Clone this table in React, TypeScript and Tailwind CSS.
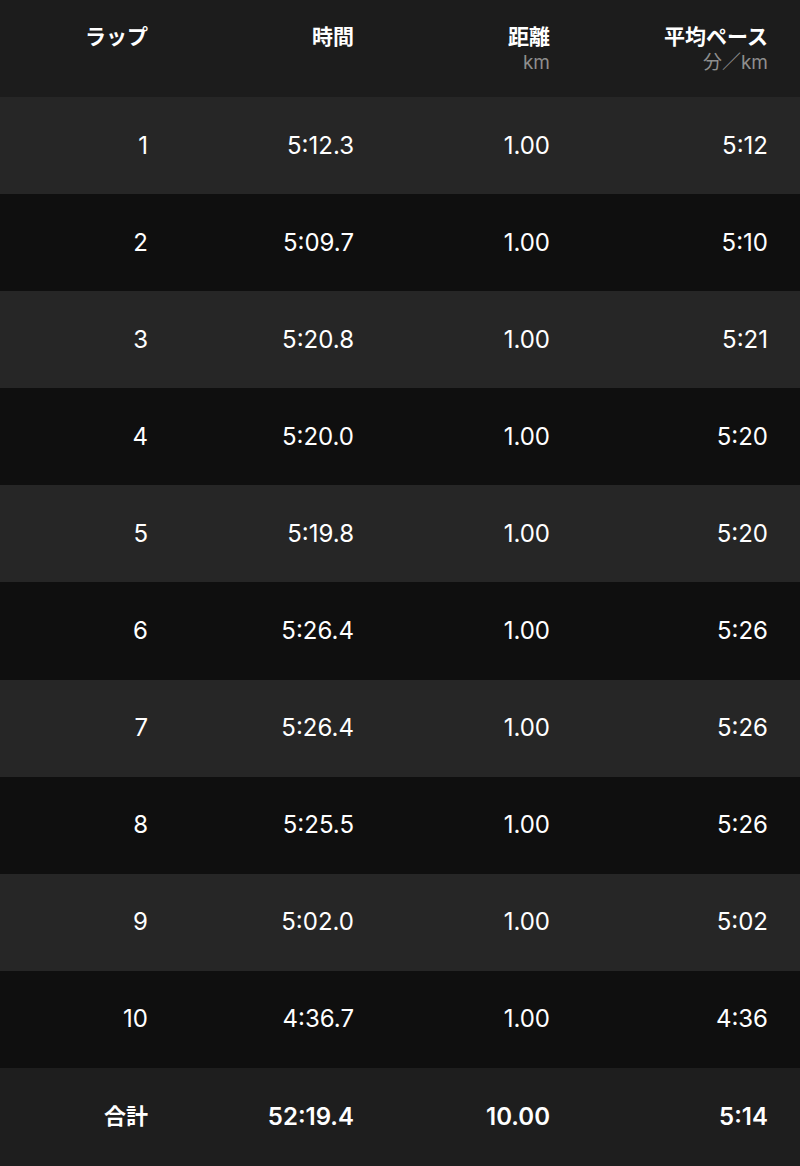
const laps = [
  { lap: "1", time: "5:12.3", dist: "1.00", pace: "5:12" },
  { lap: "2", time: "5:09.7", dist: "1.00", pace: "5:10" },
  { lap: "3", time: "5:20.8", dist: "1.00", pace: "5:21" },
  { lap: "4", time: "5:20.0", dist: "1.00", pace: "5:20" },
  { lap: "5", time: "5:19.8", dist: "1.00", pace: "5:20" },
  { lap: "6", time: "5:26.4", dist: "1.00", pace: "5:26" },
  { lap: "7", time: "5:26.4", dist: "1.00", pace: "5:26" },
  { lap: "8", time: "5:25.5", dist: "1.00", pace: "5:26" },
  { lap: "9", time: "5:02.0", dist: "1.00", pace: "5:02" },
  { lap: "10", time: "4:36.7", dist: "1.00", pace: "4:36" },
];

const font = { fontFamily: '"Inter", "Noto Sans CJK JP", sans-serif' };

export default function App() {
  return (
    <div className="w-[800px] min-h-[1166px] bg-[#0f0f0f] text-white" style={font}>
      {/* header */}
      <div className="grid h-[97px] grid-cols-[148px_206px_196px_218px] bg-[#1c1c1c] pt-[22px] pr-[32px] text-right">
        <div className="text-[21px] font-bold leading-[30px]">ラップ</div>
        <div className="text-[21px] font-bold leading-[30px]">時間</div>
        <div>
          <div className="text-[21px] font-bold leading-[30px]">距離</div>
          <div className="text-[19px] leading-[22px] text-[#8e8e8e]">km</div>
        </div>
        <div>
          <div className="text-[21px] font-bold leading-[30px]">平均ペース</div>
          <div className="text-[19px] leading-[22px] text-[#8e8e8e]">分／km</div>
        </div>
      </div>

      {laps.map((l, i) => (
        <div
          key={l.lap}
          className={`grid h-[97.1px] grid-cols-[148px_206px_196px_218px] items-center pr-[32px] text-right text-[24px] ${
            i % 2 === 0 ? "bg-[#262626]" : "bg-[#0f0f0f]"
          }`}
        >
          <div>{l.lap}</div>
          <div>{l.time}</div>
          <div>{l.dist}</div>
          <div>{l.pace}</div>
        </div>
      ))}

      {/* total */}
      <div className="grid h-[98px] grid-cols-[148px_206px_196px_218px] items-center bg-[#1e1e1e] pr-[32px] text-right text-[24px] font-semibold">
        <div className="text-[22px] font-bold">合計</div>
        <div>52:19.4</div>
        <div>10.00</div>
        <div>5:14</div>
      </div>
    </div>
  );
}
